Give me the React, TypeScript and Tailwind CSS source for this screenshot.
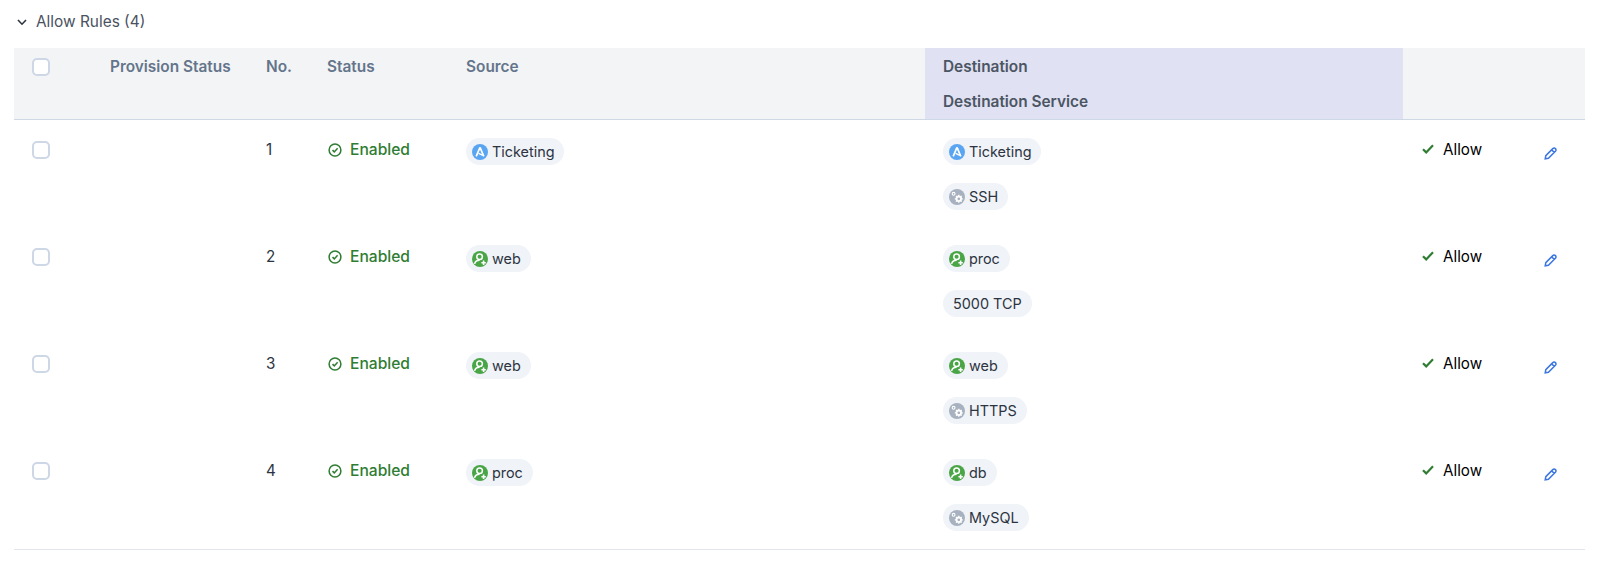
type PillKind = 'app' | 'workload' | 'service' | 'none';
type PillData = { kind: PillKind; label: string };
type Rule = { no: number; source: PillData; destination: PillData; service: PillData };

const rules: Rule[] = [
  {
    no: 1,
    source: { kind: 'app', label: 'Ticketing' },
    destination: { kind: 'app', label: 'Ticketing' },
    service: { kind: 'service', label: 'SSH' },
  },
  {
    no: 2,
    source: { kind: 'workload', label: 'web' },
    destination: { kind: 'workload', label: 'proc' },
    service: { kind: 'none', label: '5000 TCP' },
  },
  {
    no: 3,
    source: { kind: 'workload', label: 'web' },
    destination: { kind: 'workload', label: 'web' },
    service: { kind: 'service', label: 'HTTPS' },
  },
  {
    no: 4,
    source: { kind: 'workload', label: 'proc' },
    destination: { kind: 'workload', label: 'db' },
    service: { kind: 'service', label: 'MySQL' },
  },
];

const columns = 'grid grid-cols-[78px_156px_61px_139px_477px_478px_123px_59px]';

function AppIcon() {
  return (
    <svg width="16" height="16" viewBox="0 0 16 16" className="shrink-0">
      <circle cx="8" cy="8" r="8" fill="#5aa5f2" />
      <path d="M8 3.4 L11.8 12.4 M8 3.4 L4.2 12.4" stroke="#fff" strokeWidth="1.7" fill="none" />
      <path d="M6.6 9.4 L10.8 11.4" stroke="#fff" strokeWidth="1.2" fill="none" />
    </svg>
  );
}

function WorkloadIcon() {
  return (
    <svg width="16" height="16" viewBox="0 0 16 16" className="shrink-0">
      <circle cx="8" cy="8" r="8" fill="#4aa546" />
      <circle cx="7.6" cy="5.8" r="2.8" fill="none" stroke="#fff" strokeWidth="1.5" />
      <path d="M2.6 12.8 C3.2 10.2 5.2 9.3 7.6 9.3" fill="none" stroke="#fff" strokeWidth="1.5" />
      <path d="M11.6 9.6 V14 M9.4 11.8 H13.8" stroke="#fff" strokeWidth="1.6" />
    </svg>
  );
}

function ServiceIcon() {
  return (
    <svg width="16" height="16" viewBox="0 0 16 16" className="shrink-0">
      <circle cx="8" cy="8" r="8" fill="#a7b1bf" />
      <circle cx="9.8" cy="9.8" r="2.3" fill="none" stroke="#fff" strokeWidth="1.8" />
      <path
        d="M9.8 5.8 V7 M9.8 12.6 V13.8 M5.8 9.8 H7 M12.6 9.8 H13.8 M7 7 L7.8 7.8 M11.8 11.8 L12.6 12.6 M12.6 7 L11.8 7.8 M7.8 11.8 L7 12.6"
        stroke="#fff"
        strokeWidth="1.3"
      />
      <circle cx="4.6" cy="4.8" r="1.4" fill="none" stroke="#fff" strokeWidth="1.1" />
    </svg>
  );
}

function Pill({ kind, label }: PillData) {
  return (
    <span
      className={`inline-flex h-[27px] items-center gap-[4px] self-start rounded-full bg-[#f0f3f7] pt-[1px] text-[14.4px] text-[#2c3442] ${
        kind === 'none' ? 'px-[10px]' : 'pl-[6px] pr-[10px]'
      }`}
    >
      {kind === 'app' && <AppIcon />}
      {kind === 'workload' && <WorkloadIcon />}
      {kind === 'service' && <ServiceIcon />}
      {label}
    </span>
  );
}

function Checkbox() {
  return <span className="block h-[18px] w-[18px] rounded-[5px] border-2 border-[#cdd7e6] bg-white" />;
}

export default function App() {
  return (
    <div className="h-[566px] w-[1600px] overflow-hidden bg-white pl-[14px] font-['Inter',sans-serif] text-[15.2px] text-[#2c3442]">
      <div className="flex h-[48px] items-start gap-[9px] pl-[3px] pt-[12px] text-[15.4px] text-[#4a5261]">
        <svg width="10" height="7" viewBox="0 0 10 7" fill="none" className="mt-[7px] shrink-0">
          <path d="M1 1 L5 5.2 L9 1" stroke="#2c3442" strokeWidth="1.6" />
        </svg>
        <span className="leading-[20px]">Allow Rules (4)</span>
      </div>

      <div className="w-[1571px]">
        <div className={`${columns} h-[72px] border-b border-[#cfd9e6] bg-[#f3f4f6] text-[15.4px] font-semibold text-[#64748b]`}>
          <div className="pl-[18px] pt-[10px]">
            <Checkbox />
          </div>
          <div className="pl-[18px] pt-[9px] leading-[20px]">Provision Status</div>
          <div className="pl-[18px] pt-[9px] leading-[20px]">No.</div>
          <div className="pl-[18px] pt-[9px] leading-[20px]">Status</div>
          <div className="pl-[18px] pt-[9px] leading-[20px]">Source</div>
          <div className="flex flex-col gap-[15px] bg-[#e0e1f2] pl-[18px] pt-[9px] leading-[20px] text-[#4b5563]">
            <span>Destination</span>
            <span>Destination Service</span>
          </div>
          <div />
          <div />
        </div>

        {rules.map(rule => (
          <div key={rule.no} className={`${columns} h-[107px]`}>
            <div className="pl-[18px] pt-[21px]">
              <Checkbox />
            </div>
            <div />
            <div className="pl-[18px] pt-[20px] leading-[20px]">{rule.no}</div>
            <div className="flex items-start gap-[8px] pl-[19px] pt-[20px] text-[15.6px] font-medium leading-[20px] text-[#2f7d32]">
              <svg width="14" height="14" viewBox="0 0 14 14" fill="none" className="mt-[3px] shrink-0">
                <circle cx="7" cy="7" r="5.9" stroke="#2f7d32" strokeWidth="1.5" />
                <path d="M4.5 7.1 L6.3 8.9 L9.6 5.3" stroke="#2f7d32" strokeWidth="1.5" />
              </svg>
              Enabled
            </div>
            <div className="flex flex-col pl-[18px] pt-[18px]">
              <Pill {...rule.source} />
            </div>
            <div className="flex flex-col gap-[18px] pl-[18px] pt-[18px]">
              <Pill {...rule.destination} />
              <Pill {...rule.service} />
            </div>
            <div className="flex items-start gap-[9px] pl-[19px] pt-[20px] leading-[20px] text-black">
              <svg width="12" height="10" viewBox="0 0 12 10" fill="none" className="mt-[4px] shrink-0">
                <path d="M1 5.2 L4.2 8.4 L11 1.2" stroke="#2f7d32" strokeWidth="2.2" />
              </svg>
              Allow
            </div>
            <div className="pl-[18px] pt-[27px]">
              <svg width="13" height="13" viewBox="0 0 13 13" fill="none">
                <path
                  d="M1.2 11.8 L1.8 8.6 L8.8 1.6 C9.6 .8 10.6 .8 11.4 1.6 C12.2 2.4 12.2 3.4 11.4 4.2 L4.4 11.2 Z M7.6 2.8 L10.2 5.4"
                  stroke="#3b76e1"
                  strokeWidth="1.5"
                />
              </svg>
            </div>
          </div>
        ))}

        <div className="mt-[1px] h-[1px] bg-[#e2e6ec]" />
      </div>
    </div>
  );
}
